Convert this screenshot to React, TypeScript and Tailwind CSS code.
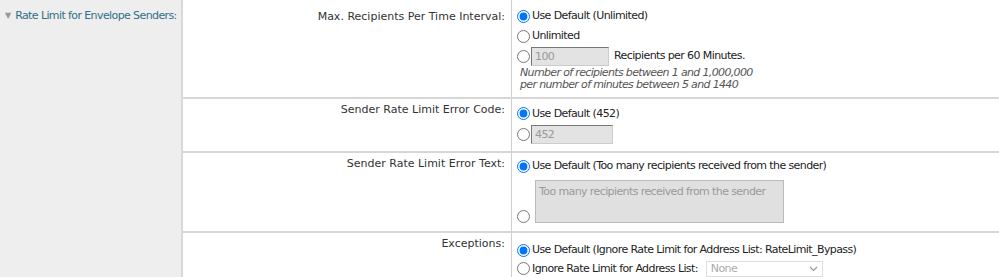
import React from "react";

const font = { fontFamily: '"DejaVu Sans", Verdana, sans-serif' };

let idc = 0;
function Radio({ checked = false }: { checked?: boolean }) {
  return (
    <input
      type="radio"
      defaultChecked={checked}
      name={"r" + idc++}
      className="m-0 w-[13px] h-[13px] accent-[#0075ff] shrink-0"
    />
  );
}

function Row({
  label,
  children,
  h,
  lpt,
  cpt,
  last = false,
}: {
  label: string;
  children: React.ReactNode;
  h: string;
  lpt: string;
  cpt: string;
  last?: boolean;
}) {
  return (
    <div className={`flex ${h} ${last ? "" : "border-b-[2px] border-[#d6d6d6]"}`}>
      <div className={`w-[329px] shrink-0 border-r border-[#cfcfcf] text-right pr-[6px] ${lpt} text-[#333] whitespace-nowrap`}>{label}</div>
      <div className={`flex-1 pl-[5px] ${cpt} tracking-[-0.6px] whitespace-nowrap`}>{children}</div>
    </div>
  );
}

const inputCls =
  "h-[19px] bg-[#e3e3e3] border border-t-[#777] border-l-[#777] border-r-[#ccc] border-b-[#ccc] px-[3px] text-[#999] text-[11px] tracking-[-0.6px]";

export default function App() {
  return (
    <div style={font} className="flex w-[999px] h-[277px] bg-white text-[11px] text-[#222] overflow-hidden">
      <div className="w-[183px] shrink-0 bg-[#eeeeee] border-r-2 border-[#d9d9d9] pt-[8px] pl-[5px]">
        <div className="flex items-center gap-[4px] text-[#2f6f88] whitespace-nowrap">
          <span className="text-[8px] text-[#999]">▼</span>
          <span className="tracking-[-0.6px]">Rate Limit for Envelope Senders:</span>
        </div>
      </div>
      <div className="flex-1 flex flex-col">
        <Row label="Max. Recipients Per Time Interval:" h="h-[99px]" lpt="pt-[9px]" cpt="pt-[8px]">
          <div className="flex items-center gap-[2px] h-[16px]"><Radio checked /><span>Use Default (Unlimited)</span></div>
          <div className="flex items-center gap-[2px] h-[16px] mt-[4px]"><Radio /><span>Unlimited</span></div>
          <div className="flex items-center gap-[1px] mt-[3px]">
            <Radio />
            <input disabled defaultValue="100" className={`w-[78px] ${inputCls}`} style={font} />
            <span className="ml-[4px]">Recipients per 60 Minutes.</span>
          </div>
          <div className="italic text-[#555] leading-[12px] mt-[1px] pl-[3px] tracking-[-0.65px]">
            <div>Number of recipients between 1 and 1,000,000</div>
            <div>per number of minutes between 5 and 1440</div>
          </div>
        </Row>
        <Row label="Sender Rate Limit Error Code:" h="h-[54px]" lpt="pt-[3px]" cpt="pt-[4px]">
          <div className="flex items-center gap-[2px] h-[16px] mt-[3px]"><Radio checked /><span>Use Default (452)</span></div>
          <div className="flex items-center gap-[1px] mt-[3px]">
            <Radio />
            <input disabled defaultValue="452" className={`w-[82px] ${inputCls}`} style={font} />
          </div>
        </Row>
        <Row label="Sender Rate Limit Error Text:" h="h-[80px]" lpt="pt-[3px]" cpt="pt-[3px]">
          <div className="flex items-center gap-[2px] h-[16px] mt-[3px]"><Radio checked /><span>Use Default (Too many recipients received from the sender)</span></div>
          <div className="flex items-end gap-[5px] mt-[5px]">
            <Radio />
            <div className="w-[249px] h-[43px] bg-[#e0e0e0] border border-[#bbb] px-[3px] pt-[3px] text-[#999]">Too many recipients received from the sender</div>
          </div>
        </Row>
        <Row label="Exceptions:" h="flex-1" lpt="pt-[3px]" cpt="pt-[7px]" last>
          <div className="flex items-center gap-[2px] h-[16px] mt-[3px]"><Radio checked /><span>Use Default (Ignore Rate Limit for Address List: RateLimit_Bypass)</span></div>
          <div className="flex items-center gap-[2px] mt-[2px]">
            <Radio />
            <span>Ignore Rate Limit for Address List:</span>
            <div className="ml-[6px] w-[117px] h-[16px] border border-[#ddd] bg-white flex items-center justify-between px-[4px] text-[#aaa]">
              <span>None</span>
              <svg width="9" height="6" viewBox="0 0 9 6"><path d="M1 1l3.5 3.5L8 1" stroke="#999" fill="none" strokeWidth="1.2" /></svg>
            </div>
          </div>
        </Row>
      </div>
    </div>
  );
}
